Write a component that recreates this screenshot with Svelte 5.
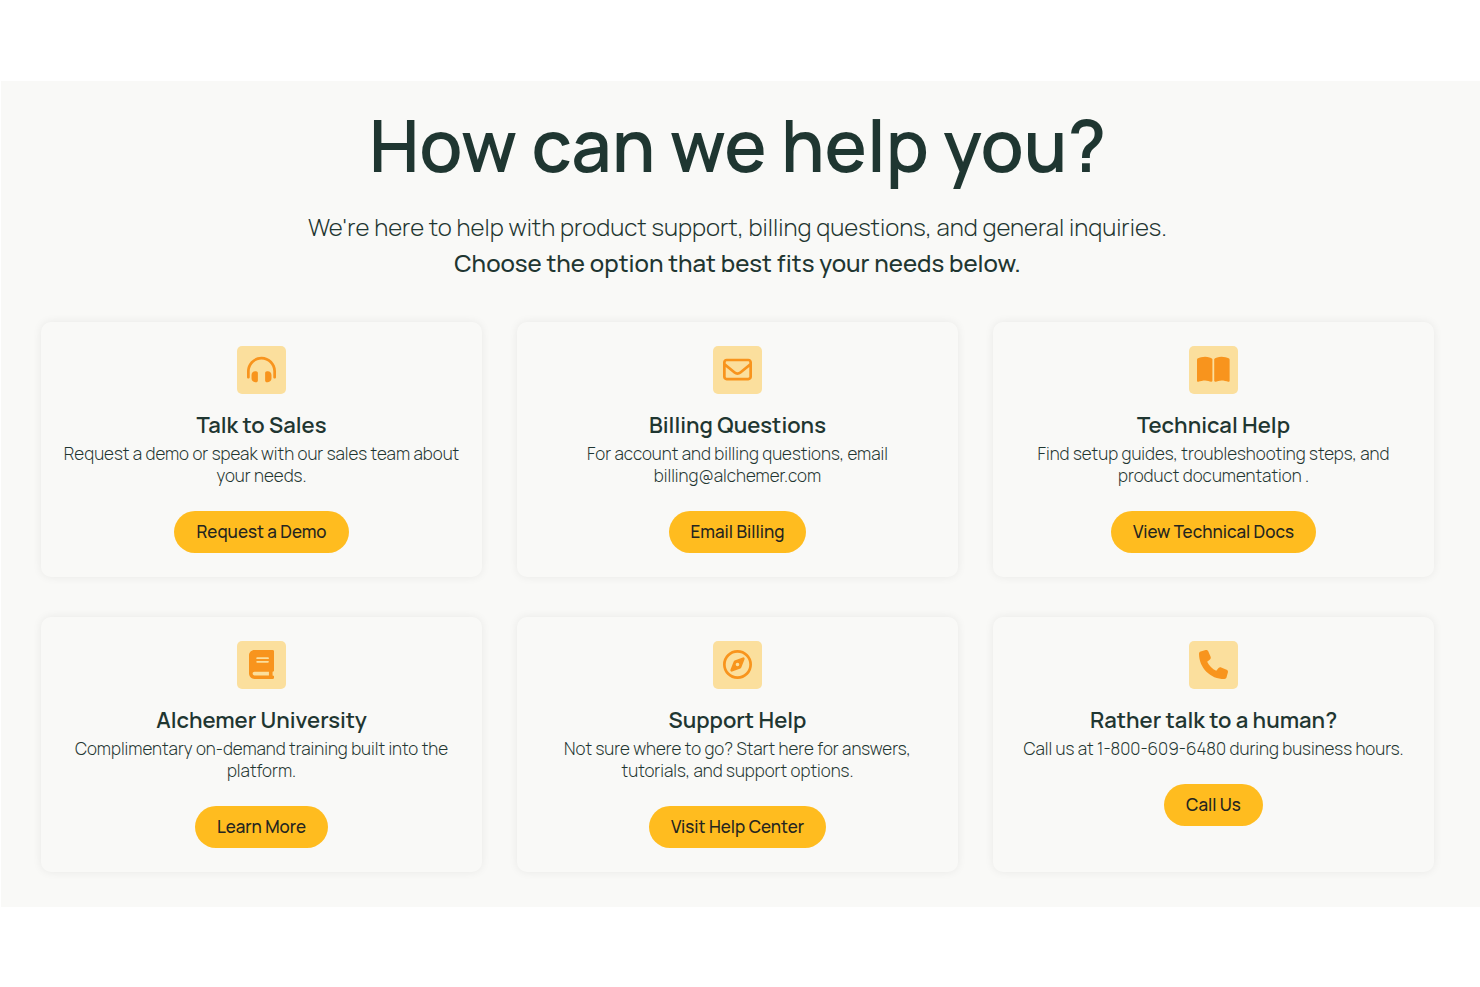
<script lang="ts">
  type Option = {
    title: string;
    text: string;
    action: string;
    href: string;
    iconWidth: number;
    icon: string;
  };

  const options: Option[] = [
    {
      title: "Talk to Sales",
      text: "Request a demo or speak with our sales team about your needs.",
      action: "Request a Demo",
      href: "#demo",
      iconWidth: 512,
      icon: "M256 80C141.1 80 48 173.1 48 288v104c0 13.3-10.7 24-24 24s-24-10.7-24-24V288C0 146.6 114.6 32 256 32s256 114.6 256 256v104c0 13.3-10.7 24-24 24s-24-10.7-24-24V288c0-114.9-93.1-208-208-208zM80 352c0-35.3 28.7-64 64-64h16c17.7 0 32 14.3 32 32v128c0 17.7-14.3 32-32 32h-16c-35.3 0-64-28.7-64-64v-64zm288-64c35.3 0 64 28.7 64 64v64c0 35.3-28.7 64-64 64h-16c-17.7 0-32-14.3-32-32V320c0-17.7 14.3-32 32-32h16z",
    },
    {
      title: "Billing Questions",
      text: "For account and billing questions, email billing@alchemer.com",
      action: "Email Billing",
      href: "mailto:billing@alchemer.com",
      iconWidth: 512,
      icon: "M64 112c-8.8 0-16 7.2-16 16v22.1L220.5 291.7c20.7 17 50.4 17 71.1 0L464 150.1V128c0-8.8-7.2-16-16-16H64zM48 212.2V384c0 8.8 7.2 16 16 16h384c8.8 0 16-7.2 16-16V212.2L322 328.8c-38.4 31.5-93.7 31.5-132 0L48 212.2zM0 128c0-35.3 28.7-64 64-64h384c35.3 0 64 28.7 64 64v256c0 35.3-28.7 64-64 64H64c-35.3 0-64-28.7-64-64V128z",
    },
    {
      title: "Technical Help",
      text: "Find setup guides, troubleshooting steps, and product documentation .",
      action: "View Technical Docs",
      href: "#docs",
      iconWidth: 576,
      icon: "M249.6 471.5c10.8 3.8 22.4-4.1 22.4-15.5V78.6c0-4.2-1.6-8.4-5-11C247.4 52 202.4 32 144 32 93.5 32 46.3 45.3 18.1 56.1 6.8 60.5 0 71.7 0 83.8v370.3c0 11.9 12.8 20.2 24.1 16.5C55.6 460.1 105.5 448 144 448c33.9 0 79 14 105.6 23.5zm76.8 0C353 462 398.1 448 432 448c38.5 0 88.4 12.1 119.9 22.6 11.3 3.8 24.1-4.6 24.1-16.5V83.8c0-12.1-6.8-23.3-18.1-27.6C529.7 45.3 482.5 32 432 32c-58.4 0-103.4 20-123 35.6-3.3 2.6-5 6.8-5 11V456c0 11.4 11.7 19.3 22.4 15.5z",
    },
    {
      title: "Alchemer University",
      text: "Complimentary on-demand training built into the platform.",
      action: "Learn More",
      href: "#university",
      iconWidth: 448,
      icon: "M96 0C43 0 0 43 0 96v320c0 53 43 96 96 96h320c17.7 0 32-14.3 32-32s-14.3-32-32-32v-64c17.7 0 32-14.3 32-32V32c0-17.7-14.3-32-32-32H96zm0 384h256v64H96c-17.7 0-32-14.3-32-32s14.3-32 32-32zm32-240c0-8.8 7.2-16 16-16h192c8.8 0 16 7.2 16 16s-7.2 16-16 16H144c-8.8 0-16-7.2-16-16zm16 48h192c8.8 0 16 7.2 16 16s-7.2 16-16 16H144c-8.8 0-16-7.2-16-16s7.2-16 16-16z",
    },
    {
      title: "Support Help",
      text: "Not sure where to go? Start here for answers, tutorials, and support options.",
      action: "Visit Help Center",
      href: "#help-center",
      iconWidth: 512,
      icon: "M464 256a208 208 0 1 0-416 0 208 208 0 1 0 416 0zM0 256a256 256 0 1 1 512 0A256 256 0 1 1 0 256zm306.7 69.1L162.4 380.6c-19.4 7.5-38.5-11.6-31-31l55.5-144.3c3.3-8.5 9.9-15.1 18.4-18.4l144.3-55.5c19.4-7.5 38.5 11.6 31 31L325.1 306.7c-3.2 8.5-9.9 15.1-18.4 18.4zM288 256a32 32 0 1 0-64 0 32 32 0 1 0 64 0z",
    },
    {
      title: "Rather talk to a human?",
      text: "Call us at 1-800-609-6480 during business hours.",
      action: "Call Us",
      href: "tel:18006096480",
      iconWidth: 512,
      icon: "M164.9 24.6c-7.7-18.6-28-28.5-47.4-23.2l-88 24C12.1 30.2 0 46 0 64c0 247.4 200.6 448 448 448 18 0 33.8-12.1 38.6-29.5l24-88c5.3-19.4-4.6-39.7-23.2-47.4l-96-40c-16.3-6.8-35.2-2.1-46.3 11.6L304.7 368C234.3 334.7 177.3 277.7 144 207.3l49.3-40.3c13.7-11.2 18.4-30 11.6-46.3l-40-96z",
    },
  ];
</script>

<main class="page">
  <section class="help">
    <header class="intro">
      <h1>How can we help you?</h1>
      <p>
        We're here to help with product support, billing questions, and general inquiries.<br />
        <strong>Choose the option that best fits your needs below.</strong>
      </p>
    </header>

    <div class="cards">
      {#each options as option}
        <article class="card">
          <span class="icon">
            <svg viewBox="0 0 {option.iconWidth} 512" aria-hidden="true">
              <path d={option.icon} />
            </svg>
          </span>
          <h2>{option.title}</h2>
          <p>{option.text}</p>
          <a class="button" href={option.href}>{option.action}</a>
        </article>
      {/each}
    </div>
  </section>
</main>

<style>
  :global(body) {
    margin: 0;
    background: #ffffff;
    color: #1f3631;
    font-family: Manrope, Inter, "Open Sans", sans-serif;
  }

  .page {
    display: flex;
    flex-direction: column;
    justify-content: center;
    min-height: 100vh;
  }

  .help {
    margin-left: 1px;
    padding: 24px 46px 35px 40px;
    background: #f9f9f7;
  }

  .intro {
    margin-bottom: 41px;
    text-align: center;
  }

  h1 {
    margin: 0 0 24px;
    font-size: 71px;
    font-weight: 600;
    line-height: 80px;
  }

  .intro p {
    margin: 0;
    font-size: 24px;
    font-weight: 300;
    line-height: 36px;
  }

  .intro strong {
    font-weight: 500;
  }

  .cards {
    display: grid;
    grid-template-columns: repeat(3, minmax(0, 1fr));
    gap: 40px 35px;
  }

  .card {
    display: flex;
    flex-direction: column;
    align-items: center;
    padding: 24px 20px;
    border-radius: 10px;
    box-shadow: 0 0 10px rgba(0, 0, 0, 0.07);
    text-align: center;
  }

  .icon {
    display: flex;
    align-items: center;
    justify-content: center;
    width: 49px;
    height: 48px;
    margin-bottom: 17px;
    border-radius: 5px;
    background: #fbdf9d;
  }

  .icon svg {
    height: 29px;
    fill: #f8941d;
  }

  h2 {
    margin: 0 0 4px;
    font-size: 22px;
    font-weight: 600;
    line-height: 28px;
  }

  .card p {
    margin: 0 0 24px;
    font-size: 17px;
    font-weight: 300;
    line-height: 22px;
  }

  .button {
    padding: 0 22px;
    border-radius: 21px;
    background: #ffbc1f;
    color: #25251f;
    font-size: 17px;
    font-weight: 500;
    line-height: 42px;
    text-decoration: none;
  }

  @media (max-width: 900px) {
    .cards {
      grid-template-columns: 1fr;
    }

    h1 {
      font-size: 48px;
      line-height: 56px;
    }
  }
</style>
